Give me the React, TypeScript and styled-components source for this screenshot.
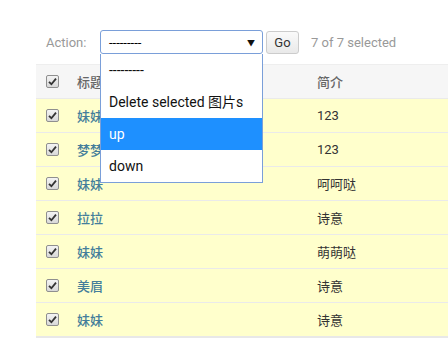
import React from 'react'
import styled, { createGlobalStyle } from 'styled-components'

const GlobalStyle = createGlobalStyle`
  body {
    margin: 0;
    background: #fff;
    font-family: Roboto, "Noto Sans CJK SC", sans-serif;
    font-size: 13px;
    color: #333;
  }
`

const Page = styled.div`
  padding: 30px 0 0 36px;
  height: 350px;
  box-sizing: border-box;
  overflow: hidden;
`
const ActionBar = styled.div`
  display: flex;
  align-items: center;
  height: 24px;
  padding-left: 10px;
  margin-bottom: 10px;
`
const Label = styled.span`
  color: #999;
  width: 54px;
`
const SelectWrap = styled.div`
  position: relative;
`
const SelectBox = styled.div`
  width: 163px;
  height: 24px;
  box-sizing: border-box;
  border: 1px solid #7a9fd9;
  border-radius: 3px;
  display: flex;
  align-items: center;
  justify-content: space-between;
  padding: 0 7px 0 8px;
  color: #000;
`
const Arrow = styled.span`
  font-size: 8px;
  color: #111;
`
const Menu = styled.div`
  position: absolute;
  top: 24px;
  left: 0;
  width: 163px;
  box-sizing: border-box;
  border: 1px solid #7a9fd9;
  border-top: none;
  background: #fff;
  z-index: 2;
`
const Option = styled.div<{ $active?: boolean }>`
  height: 32px;
  line-height: 33px;
  padding-left: 8px;
  font-size: 14px;
  color: ${p => (p.$active ? '#fff' : '#111')};
  background: ${p => (p.$active ? '#1e90ff' : '#fff')};
`
const GoButton = styled.div`
  margin-left: 3px;
  width: 33px;
  height: 23px;
  box-sizing: border-box;
  border: 1px solid #ccc;
  border-radius: 3px;
  background: linear-gradient(#fafafa, #e9e9e9);
  display: flex;
  align-items: center;
  justify-content: center;
  color: #333;
`
const Counter = styled.span`
  margin-left: 12px;
  color: #999;
`
const Table = styled.div`
  border-top: 1px solid #eee;
  border-bottom: 2px solid #e8e8e8;
`
const Row = styled.div<{ $head?: boolean }>`
  display: grid;
  grid-template-columns: 41px 240px 1fr;
  align-items: center;
  height: 33px;
  border-bottom: 1px solid #eaeaea;
  background: ${p => (p.$head ? '#f6f6f6' : '#ffffcc')};
  &:last-child {
    border-bottom: none;
  }
`
const CheckCell = styled.div`
  padding-left: 10px;
  display: flex;
`
const Box = styled.span`
  width: 13px;
  height: 13px;
  box-sizing: border-box;
  border: 1px solid #8f8f8f;
  border-radius: 2px;
  background: linear-gradient(#f4f4f4, #d8d8d8);
  display: flex;
  align-items: center;
  justify-content: center;
`
const HeadCell = styled.div`
  color: #666;
  font-weight: 500;
`
const TitleLink = styled.a`
  color: #447e9b;
  font-weight: 500;
  text-decoration: none;
`
const Cell = styled.div`
  color: #333;
`

const Check = () => (
  <CheckCell>
    <Box>
      <svg width="9" height="9" viewBox="0 0 9 9">
        <path d="M1 4.8 L3.4 7.2 L8 1.6" fill="none" stroke="#333" strokeWidth="1.8" />
      </svg>
    </Box>
  </CheckCell>
)

const rows = [
  ['妹妹', '123'],
  ['梦梦', '123'],
  ['妹妹', '呵呵哒'],
  ['拉拉', '诗意'],
  ['妹妹', '萌萌哒'],
  ['美眉', '诗意'],
  ['妹妹', '诗意'],
]

const App = () => (
  <>
    <GlobalStyle />
    <Page>
      <ActionBar>
        <Label>Action:</Label>
        <SelectWrap>
          <SelectBox>
            <span>---------</span>
            <Arrow>▼</Arrow>
          </SelectBox>
          <Menu>
            <Option>---------</Option>
            <Option>Delete selected 图片s</Option>
            <Option $active>up</Option>
            <Option>down</Option>
          </Menu>
        </SelectWrap>
        <GoButton>Go</GoButton>
        <Counter>7 of 7 selected</Counter>
      </ActionBar>
      <Table>
        <Row $head>
          <Check />
          <HeadCell>标题</HeadCell>
          <HeadCell>简介</HeadCell>
        </Row>
        {rows.map(([title, intro], i) => (
          <Row key={i}>
            <Check />
            <div>
              <TitleLink href="#">{title}</TitleLink>
            </div>
            <Cell>{intro}</Cell>
          </Row>
        ))}
      </Table>
    </Page>
  </>
)

export default App
